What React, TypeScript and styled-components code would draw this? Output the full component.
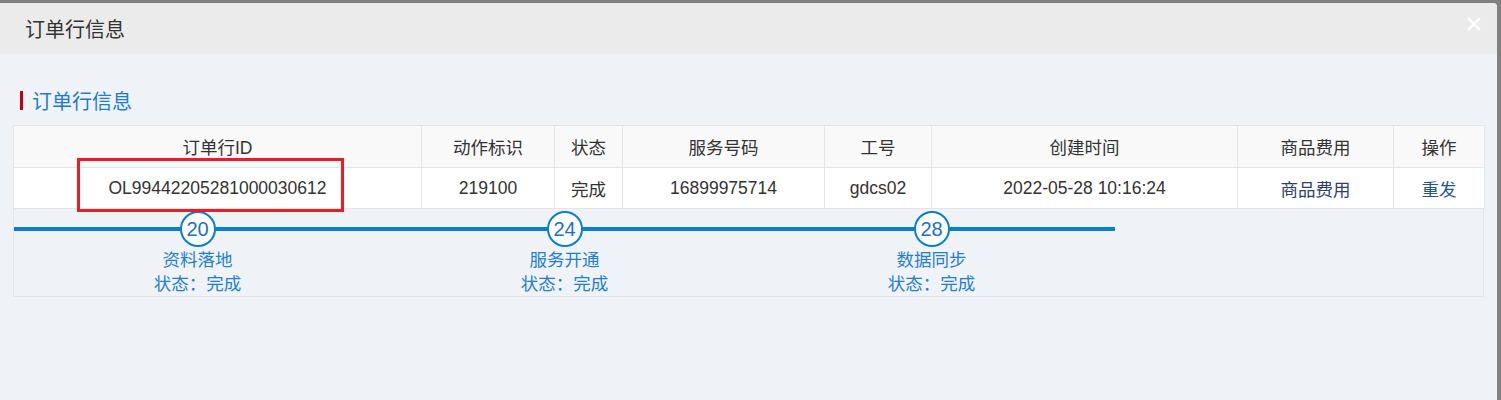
import styled, { createGlobalStyle } from 'styled-components'

const GlobalStyle = createGlobalStyle`
    body {
        margin: 0;
        font-family: "Liberation Sans", "Noto Sans CJK SC", sans-serif;
    }
`

const Overlay = styled.div`
    height: 400px;
    box-sizing: border-box;
    padding: 3px 4px 0 0;
    background: #808080;
    display: flex;
`
const Dialog = styled.div`
    flex: 1;
    display: flex;
    flex-direction: column;
    background: #eff2f7;
    border-top-right-radius: 4px;
    overflow: hidden;
`
const DialogHeader = styled.div`
    height: 51px;
    flex-shrink: 0;
    display: flex;
    align-items: center;
    justify-content: space-between;
    padding: 0 16px 0 25px;
    background: #ebebeb;
    color: #333;
    font-size: 20px;
`
const CloseButton = styled.button`
    border: none;
    background: none;
    padding: 0;
    margin-top: -10px;
    width: 14px;
    height: 14px;
    display: flex;
    cursor: pointer;
`
const DialogBody = styled.div`
    padding: 35px 13px 0 13px;
`
const SectionTitle = styled.div`
    display: flex;
    align-items: center;
    gap: 9px;
    height: 22px;
    margin: 0 0 14px 7px;
    color: #1a7dd0;
    font-size: 20px;
    &::before {
        content: '';
        width: 3px;
        height: 19px;
        background: #c00012;
    }
`
const TableWrap = styled.div`
    position: relative;
`
const Table = styled.table`
    width: 1471px;
    border-collapse: collapse;
    table-layout: fixed;
    font-size: 17.5px;
    color: #333;
`
const Col = styled.col<{ w: number }>`
    width: ${(p) => p.w}px;
`
const HeadCell = styled.th`
    height: 41px;
    padding: 0;
    font-weight: normal;
    text-align: center;
    background: #f9f9f9;
    border: 1px solid #e5e5e5;
`
const Cell = styled.td<{ tone?: 'fee' | 'link' }>`
    height: 40px;
    padding: 0;
    text-align: center;
    background: #fff;
    border: 1px solid #e5e5e5;
    color: ${(p) => (p.tone === 'fee' ? '#2e3f6e' : p.tone === 'link' ? '#1d5597' : '#333')};
`
const Highlight = styled.div`
    position: absolute;
    left: 64px;
    top: 33px;
    width: 267px;
    height: 54px;
    box-sizing: border-box;
    border: 3px solid #ec1c24;
    pointer-events: none;
`
const Progress = styled.div`
    display: flex;
    padding-top: 2px;
    border: 1px solid #e5e5e5;
    border-top: none;
`
const Step = styled.div`
    width: 367px;
    display: flex;
    flex-direction: column;
    align-items: center;
    color: #1f7fd2;
`
const Track = styled.div<{ first?: boolean; last?: boolean }>`
    align-self: stretch;
    display: flex;
    justify-content: center;
    margin-bottom: 1px;
    background: linear-gradient(#0a7fd0, #0a7fd0) center / 100% 4px no-repeat;
    border-radius: ${(p) => (p.first ? '2px 0 0 2px' : p.last ? '0 2px 2px 0' : '0')};
`
const Bubble = styled.div`
    width: 36px;
    height: 36px;
    box-sizing: border-box;
    border: 2px solid #0a7fd0;
    border-radius: 50%;
    background: #fff;
    display: flex;
    align-items: center;
    justify-content: center;
    font-size: 20px;
    color: #1a6fc6;
`
const StepText = styled.div`
    font-size: 17.5px;
    line-height: 24px;
`

const columns = [
    { title: '订单行ID', w: 408 },
    { title: '动作标识', w: 133 },
    { title: '状态', w: 68 },
    { title: '服务号码', w: 202 },
    { title: '工号', w: 107 },
    { title: '创建时间', w: 306 },
    { title: '商品费用', w: 156 },
    { title: '操作', w: 91 },
]

const steps = [
    { no: 20, name: '资料落地' },
    { no: 24, name: '服务开通' },
    { no: 28, name: '数据同步' },
]

export default function App() {
    return (
        <>
            <GlobalStyle />
            <Overlay>
                <Dialog>
                    <DialogHeader>
                        订单行信息
                        <CloseButton aria-label="关闭">
                            <svg width="14" height="14" viewBox="0 0 14 14">
                                <path d="M1 1L13 13M13 1L1 13" stroke="#fff" strokeWidth="2.4" />
                            </svg>
                        </CloseButton>
                    </DialogHeader>
                    <DialogBody>
                        <SectionTitle>订单行信息</SectionTitle>
                        <TableWrap>
                            <Table>
                                <colgroup>
                                    {columns.map((c) => (
                                        <Col key={c.title} w={c.w} />
                                    ))}
                                </colgroup>
                                <thead>
                                    <tr>
                                        {columns.map((c) => (
                                            <HeadCell key={c.title}>{c.title}</HeadCell>
                                        ))}
                                    </tr>
                                </thead>
                                <tbody>
                                    <tr>
                                        <Cell>OL99442205281000030612</Cell>
                                        <Cell>219100</Cell>
                                        <Cell>完成</Cell>
                                        <Cell>16899975714</Cell>
                                        <Cell>gdcs02</Cell>
                                        <Cell>2022-05-28 10:16:24</Cell>
                                        <Cell tone="fee">商品费用</Cell>
                                        <Cell tone="link">重发</Cell>
                                    </tr>
                                </tbody>
                            </Table>
                            <Progress>
                                {steps.map((s, i) => (
                                    <Step key={s.no}>
                                        <Track first={i === 0} last={i === steps.length - 1}>
                                            <Bubble>{s.no}</Bubble>
                                        </Track>
                                        <StepText>{s.name}</StepText>
                                        <StepText>状态：完成</StepText>
                                    </Step>
                                ))}
                            </Progress>
                            <Highlight />
                        </TableWrap>
                    </DialogBody>
                </Dialog>
            </Overlay>
        </>
    )
}
